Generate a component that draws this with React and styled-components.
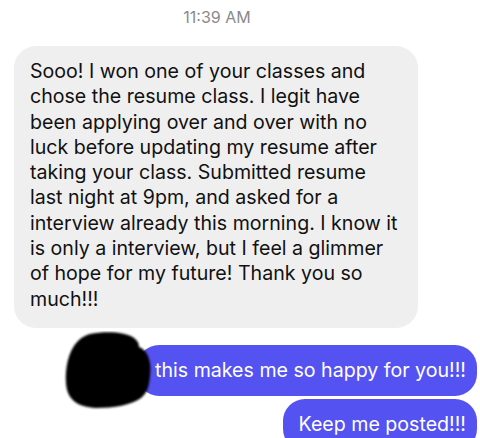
import React from "react";
import styled, { createGlobalStyle } from "styled-components";

const GlobalStyle = createGlobalStyle`
  html, body {
    margin: 0;
    padding: 0;
    background: #fff;
  }
  body {
    font-family: Inter, "Liberation Sans", Arial, sans-serif;
    -webkit-font-smoothing: antialiased;
  }
`;

const Thread = styled.div`
  width: 480px;
  height: 438px;
  overflow: hidden;
  display: flex;
  flex-direction: column;
`;

const Stamp = styled.div`
  text-align: center;
  color: #8a8a8e;
  font-size: 16px;
  line-height: 18px;
  padding: 8px 46px 0 0;
`;

const Row = styled.div`
  position: relative;
  display: flex;
  justify-content: ${(p) => (p.$mine ? "flex-end" : "flex-start")};
  padding: ${(p) => (p.$mine ? "0 3px 0 0" : "0 0 0 14px")};
  margin-top: ${(p) => p.$gap || 0}px;
`;

const Bubble = styled.div`
  box-sizing: border-box;
  width: ${(p) => (p.$mine ? "auto" : "404px")};
  background: ${(p) => (p.$mine ? "#5552f2" : "#efefef")};
  color: ${(p) => (p.$mine ? "#fff" : "#111")};
  border-radius: 22px;
  font-size: 19.6px;
  line-height: 25.3px;
  padding: ${(p) => (p.$mine ? `13px 11px 13px ${p.$left || 18}px` : "13px 16px 16px 16px")};
  white-space: nowrap;
`;

const Line = styled.span`
  display: block;
`;

// hand-drawn marker scribble that hides the avatar
const Scribble = styled.svg`
  position: absolute;
  left: 62px;
  top: -14px;
  display: block;
`;

const Blob = () => (
  <Scribble width="94" height="80" viewBox="0 0 94 80">
    <defs>
      <filter id="soft" x="-10%" y="-10%" width="120%" height="120%">
        <feGaussianBlur stdDeviation="1.1" />
      </filter>
    </defs>
    <path
      d="M28 3 C44 0 64 1 72 7 C76 10 77 13 77 16 C86 19 90 32 88 45 C87 56 85 62 79 67 C69 74 52 77 34 77 C16 76 5 69 4 52 C3 38 6 20 16 10 C20 6 24 4 28 3 Z"
      fill="#000"
      filter="url(#soft)"
    />
  </Scribble>
);

const incoming = [
  "Sooo! I won one of your classes and",
  "chose the resume class. I legit have",
  "been applying over and over with no",
  "luck before updating my resume after",
  "taking your class. Submitted resume",
  "last night at 9pm, and asked for a",
  "interview already this morning. I know it",
  "is only a interview, but I feel a glimmer",
  "of hope for my future! Thank you so",
  "much!!!",
];

export default function App() {
  return (
    <>
      <GlobalStyle />
      <Thread>
        <Stamp>11:39 AM</Stamp>
        <Row $gap={20}>
          <Bubble>
            {incoming.map((t) => (
              <Line key={t}>{t}</Line>
            ))}
          </Bubble>
        </Row>
        <Row $mine $gap={17}>
          <Bubble $mine>this makes me so happy for you!!!</Bubble>
          <Blob />
        </Row>
        <Row $mine $gap={3}>
          <Bubble $mine $left={16}>Keep me posted!!!</Bubble>
        </Row>
      </Thread>
    </>
  );
}
